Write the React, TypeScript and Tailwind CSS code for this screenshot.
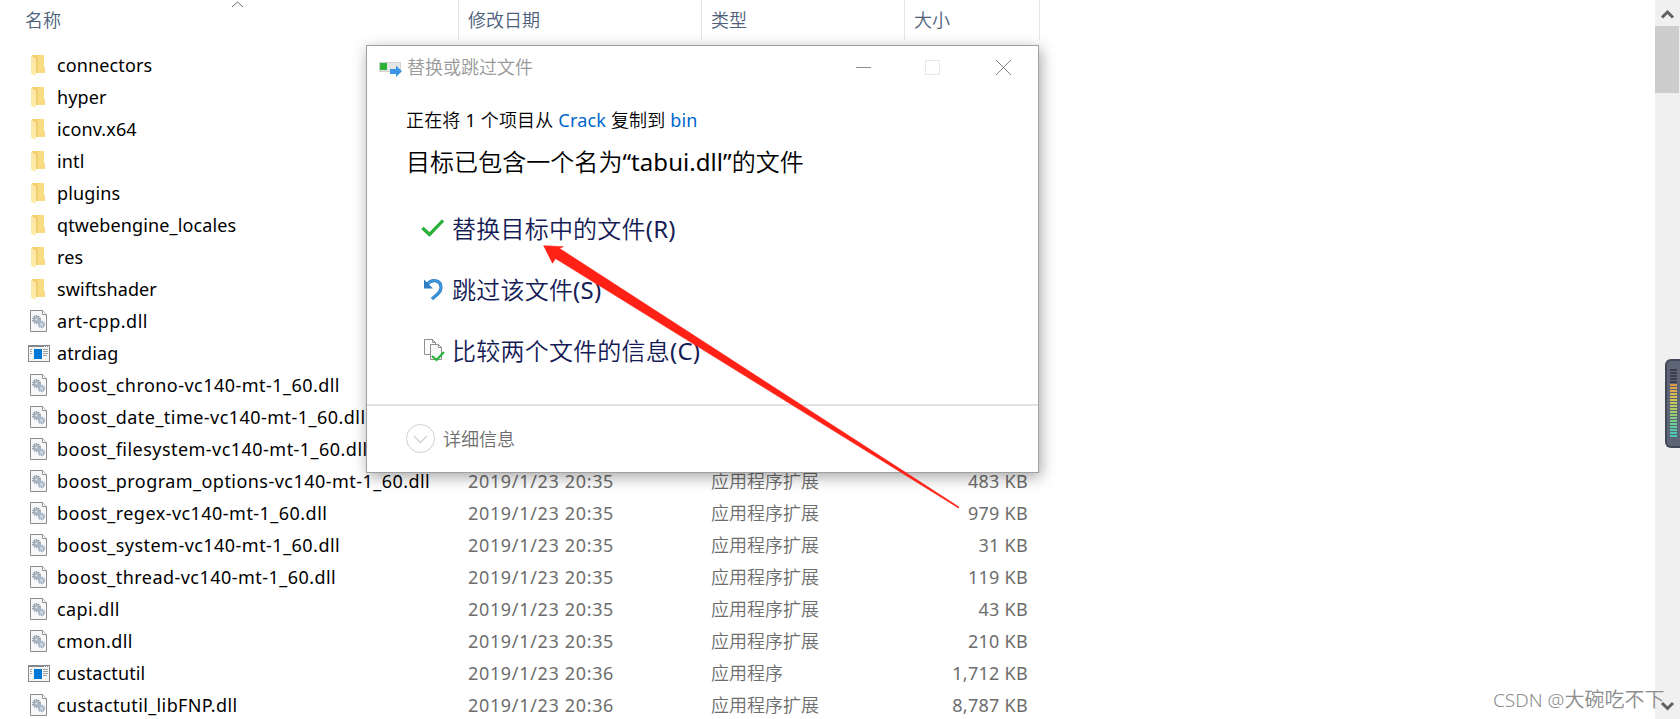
type Kind = "folder" | "dll" | "exe";

interface Entry {
  name: string;
  kind: Kind;
  date?: string;
  size?: string;
}

const entries: Entry[] = [
  { name: "connectors", kind: "folder" },
  { name: "hyper", kind: "folder" },
  { name: "iconv.x64", kind: "folder" },
  { name: "intl", kind: "folder" },
  { name: "plugins", kind: "folder" },
  { name: "qtwebengine_locales", kind: "folder" },
  { name: "res", kind: "folder" },
  { name: "swiftshader", kind: "folder" },
  { name: "art-cpp.dll", kind: "dll" },
  { name: "atrdiag", kind: "exe" },
  { name: "boost_chrono-vc140-mt-1_60.dll", kind: "dll" },
  { name: "boost_date_time-vc140-mt-1_60.dll", kind: "dll" },
  { name: "boost_filesystem-vc140-mt-1_60.dll", kind: "dll" },
  { name: "boost_program_options-vc140-mt-1_60.dll", kind: "dll", date: "2019/1/23 20:35", size: "483 KB" },
  { name: "boost_regex-vc140-mt-1_60.dll", kind: "dll", date: "2019/1/23 20:35", size: "979 KB" },
  { name: "boost_system-vc140-mt-1_60.dll", kind: "dll", date: "2019/1/23 20:35", size: "31 KB" },
  { name: "boost_thread-vc140-mt-1_60.dll", kind: "dll", date: "2019/1/23 20:35", size: "119 KB" },
  { name: "capi.dll", kind: "dll", date: "2019/1/23 20:35", size: "43 KB" },
  { name: "cmon.dll", kind: "dll", date: "2019/1/23 20:35", size: "210 KB" },
  { name: "custactutil", kind: "exe", date: "2019/1/23 20:36", size: "1,712 KB" },
  { name: "custactutil_libFNP.dll", kind: "dll", date: "2019/1/23 20:36", size: "8,787 KB" },
];

function FolderIcon() {
  return (
    <svg width="22" height="24" viewBox="0 0 22 24">
      <path d="M4 2h12v12l1 1v5H6z" fill="#f3cf70" />
      <path d="M10 2h6v12l1 1v5h-7z" fill="#f9db82" />
      <path d="M3 2.500l5 3.500v14l-1 3-4-3z" fill="#ffe9a6" />
    </svg>
  );
}

function DllIcon() {
  return (
    <svg width="22" height="24" viewBox="0 0 22 24">
      <path d="M2.5 1.5h12l4 4v17h-16z" fill="#f7f8f9" stroke="#8c8c8c" />
      <path d="M14.5 1.5v4h4" fill="#fff" stroke="#8c8c8c" />
      <circle cx="8.5" cy="10.5" r="3.6" fill="none" stroke="#8696a5" strokeWidth="1.6" strokeDasharray="1.5 0.75" />
      <circle cx="8.5" cy="10.5" r="2.6" fill="#c3ccd4" stroke="#8696a5" strokeWidth="0.8" />
      <circle cx="8.5" cy="10.5" r="1.1" fill="#fff" stroke="#8696a5" strokeWidth="0.6" />
      <circle cx="13.5" cy="15.5" r="3" fill="none" stroke="#8ba0b3" strokeWidth="1.3" strokeDasharray="1.3 0.7" />
      <circle cx="13.5" cy="15.5" r="2.2" fill="#dbe4ec" stroke="#8ba0b3" strokeWidth="0.7" />
      <circle cx="13.5" cy="15.5" r="0.8" fill="#fff" stroke="#8ba0b3" strokeWidth="0.5" />
    </svg>
  );
}

function ExeIcon() {
  return (
    <svg width="22" height="24" viewBox="0 0 22 24" shapeRendering="crispEdges">
      <path d="M0.5 4.5h21v16H0.5z" fill="#f5f5f5" stroke="#85888c" />
      <path d="M0 4h22v2H0z" fill="#85888c" />
      <path d="M16 5h1v1h-1zM18 5h1v1h-1zM20 5h1v1h-1z" fill="#e6e6e6" />
      <path d="M6 8h8v10H6z" fill="#0078d7" />
      <path d="M2 8h2v1H2zM2 10h2v1H2zM2 12h2v1H2zM15 8h5v1h-5zM15 10h5v1h-5zM15 12h5v1h-5zM15 14h4v1h-4z" fill="#a3a3a3" />
    </svg>
  );
}

function Icon({ kind }: { kind: Kind }) {
  if (kind === "folder") return <FolderIcon />;
  if (kind === "exe") return <ExeIcon />;
  return <DllIcon />;
}

function nameTracking({ name, kind }: Entry) {
  if (name.includes("-")) return "tracking-[0.46px]";
  if (kind === "dll") return "tracking-[0.38px]";
  return "tracking-[0.12px]";
}

function Header() {
  return (
    <div className="flex h-10 pl-[25px] leading-[41px] text-[#4c607a]">
      <div className="flex w-[434px] border-r border-[#e5e5e5]">
        <span className="w-[205px]">名称</span>
        <svg className="mt-px" width="14" height="7" viewBox="0 0 14 7" fill="none" stroke="#6b6b6b">
          <path d="M2 6l5.5-5 5.5 5" />
        </svg>
      </div>
      <div className="w-[243px] border-r border-[#e5e5e5] pl-[9px]">修改日期</div>
      <div className="w-[203px] border-r border-[#e5e5e5] pl-[9px]">类型</div>
      <div className="w-[135px] border-r border-[#e5e5e5] pl-[9px]">大小</div>
    </div>
  );
}

function Row({ entry }: { entry: Entry }) {
  return (
    <div className="flex h-8 items-center pl-7 leading-8 text-[#6d6d6d]">
      <Icon kind={entry.kind} />
      <span className={`ml-[7px] w-[411px] whitespace-nowrap text-black ${nameTracking(entry)}`}>{entry.name}</span>
      <span className="w-[243px] tracking-[0.66px]">{entry.date}</span>
      <span className="w-[200px]">{entry.date && (entry.kind === "exe" ? "应用程序" : "应用程序扩展")}</span>
      <span className="w-[117px] text-right tracking-[0.28px]">{entry.size}</span>
    </div>
  );
}

function TitleBar() {
  return (
    <div className="flex h-[42px] items-center pl-3 text-[#999]">
      <svg className="mt-1" width="24" height="18" viewBox="0 0 24 18">
        <path d="M0.5 2.5h21v9H0.5z" fill="#e6e6e6" stroke="#d0d0d0" />
        <path d="M1 3h7v7H1z" fill="#2fb135" />
        <path d="M11 9h6V5.500l6 5.700-6 5.700V14h-6z" fill="#3a96e4" />
      </svg>
      <span className="ml-1 grow">替换或跳过文件</span>
      <svg className="mr-[25px]" width="158" height="17" viewBox="0 0 158 17" fill="none">
        <path d="M1 8.500h15" stroke="#8f8f8f" />
        <path d="M70.500 1.500h14v14h-14z" stroke="#e8e8e8" />
        <path d="M141 1l15 15M156 1l-15 15" stroke="#858585" />
      </svg>
    </div>
  );
}

function CheckIcon() {
  return (
    <svg className="-mt-0.5" width="24" height="24" viewBox="0 0 24 24" fill="none">
      <path d="M1.500 12l7 6.500L22 4.500" stroke="#1e9e2e" strokeWidth="3.200" />
      <path d="M1.700 12l6.800 6L21.800 4.500" stroke="#27b837" strokeWidth="2" />
    </svg>
  );
}

function UndoIcon() {
  return (
    <svg className="-mt-0.5" width="24" height="24" viewBox="0 0 24 24" fill="none">
      <path d="M6.500 7C11 1.500 20 3 20 10.500c0 5-4.500 7.500-9 11.500" stroke="#2f7fc4" strokeWidth="3.200" />
      <path d="M6.500 7C11 1.500 20 3 20 10.500c0 5-4.500 7.500-9 11.500" stroke="#3f9ae0" strokeWidth="1.600" />
      <path d="M3 2.500v9h9z" fill="#2f7fc4" />
    </svg>
  );
}

function CompareIcon() {
  return (
    <svg className="-mt-0.5" width="24" height="24" viewBox="0 0 24 24" fill="none" stroke="#8f8f8f">
      <path d="M3.500 1.500h8l3 3v12h-11z" fill="#fafafa" />
      <path d="M9.500 6.500h8l3 3v12h-11z" fill="#f6f7f9" />
      <path d="M17.500 6.500v3h3M11.500 1.500v3h3" />
      <path d="M11 18l4.500 4L23 14" stroke="#27b337" strokeWidth="2.200" />
    </svg>
  );
}

function Dialog() {
  return (
    <div className="absolute left-[366px] top-[45px] flex h-[428px] w-[673px] flex-col border border-[#a0a0a0] bg-white shadow-[2px_4px_14px_rgba(0,0,0,0.35)]">
      <TitleBar />
      <div className="flex grow flex-col pl-[39px]">
        <p className="mt-4 leading-8 tracking-[0.18px] text-black">
          正在将 1 个项目从 <span className="text-[#0066cc]">Crack</span> 复制到 <span className="text-[#0066cc]">bin</span>
        </p>
        <p className="mt-[6px] text-2xl leading-10 tracking-[0.05px] text-black">目标已包含一个名为“tabui.dll”的文件</p>
        <div className="mt-[18px] flex flex-col pl-[15px] text-2xl tracking-[0.22px] text-[#151c55]">
          <div className="flex h-[61px] items-center gap-[7px] pb-1">
            <CheckIcon />
            替换目标中的文件(R)
          </div>
          <div className="flex h-[61px] items-center gap-[7px] pb-1">
            <UndoIcon />
            跳过该文件(S)
          </div>
          <div className="flex h-[61px] items-center gap-[7px] pb-1">
            <CompareIcon />
            比较两个文件的信息(C)
          </div>
        </div>
      </div>
      <div className="flex h-[68px] items-center gap-[7px] border-t-2 border-[#e3e3e3] pl-[38px] text-[#6d6d6d]">
        <svg className="-mt-0.5" width="31" height="31" viewBox="0 0 31 31" fill="none" stroke="#cfcfcf">
          <circle cx="15.500" cy="15.500" r="14" />
          <path d="M9 13l6.500 6.500L22 13" strokeWidth="1.300" />
        </svg>
        详细信息
      </div>
    </div>
  );
}

function Arrow() {
  return (
    <svg className="absolute left-[540px] top-[240px]" width="424" height="272" viewBox="540 240 424 272">
      <path d="M543.700 245.700L563.300 246.700L559.300 248.300L959 507L958.500 508L555.500 258.500L552.500 263.300Z" fill="#ff2116" stroke="#ff2116" strokeWidth="0.600" />
    </svg>
  );
}

function ScrollBar() {
  return (
    <div className="flex w-[25px] flex-col justify-between bg-[#f0f0f0]">
      <div>
        <svg width="25" height="26" viewBox="0 0 25 26" fill="none" stroke="#606060" strokeWidth="3">
          <path d="M7 17.500l5.500-5.500 5.500 5.500" />
        </svg>
        <div className="h-[67px] w-6 bg-[#cdcdcd]" />
      </div>
      <svg width="25" height="26" viewBox="0 0 25 26" fill="none" stroke="#606060" strokeWidth="3">
        <path d="M7 10l5.500 5.500L18 10" />
      </svg>
    </div>
  );
}

const meter = [
  "bg-[#3b3f4d]", "bg-[#3b3f4d]", "bg-[#3b3f4d]", "bg-[#3b3f4d]", "bg-[#3b3f4d]",
  "bg-[#e09a4c]", "bg-[#dfa34d]", "bg-[#dcae4f]", "bg-[#d9b751]", "bg-[#d6c055]",
  "bg-[#cfc658]", "bg-[#c5c95c]", "bg-[#bacb61]", "bg-[#afcd66]", "bg-[#a2ce6c]",
  "bg-[#94ce74]", "bg-[#86ce7d]", "bg-[#78ce87]", "bg-[#6bce92]", "bg-[#5fcd9d]",
  "bg-[#55cba8]", "bg-[#4ec9b0]", "bg-[#49c7b6]",
];

function LevelMeter() {
  return (
    <div className="absolute right-0 top-[359px] flex h-[89px] w-[15px] flex-col gap-px rounded-l-md border-2 border-r-0 border-[#434856] bg-[#5d6475] pl-[3px] pt-2">
      {meter.map((color, i) => (
        <div key={i} className={`h-0.5 w-[7px] shrink-0 ${color}`} />
      ))}
    </div>
  );
}

export default function App() {
  return (
    <div className="relative flex h-[719px] w-[1680px] justify-between overflow-hidden bg-white font-['Noto_Sans','Noto_Sans_CJK_SC_DemiLight','Noto_Sans_CJK_SC',sans-serif] text-lg">
      <div className="w-[1100px]">
        <Header />
        <div className="mt-[9px]">
          {entries.map((entry) => (
            <Row key={entry.name} entry={entry} />
          ))}
        </div>
      </div>
      <ScrollBar />
      <Dialog />
      <Arrow />
      <LevelMeter />
      <div className="absolute left-[1493px] top-[684px] whitespace-nowrap text-[19px] font-light leading-8 text-[#8c8c8c]">
        CSDN @<span className="text-[20px]">大碗吃不下</span>
      </div>
    </div>
  );
}
